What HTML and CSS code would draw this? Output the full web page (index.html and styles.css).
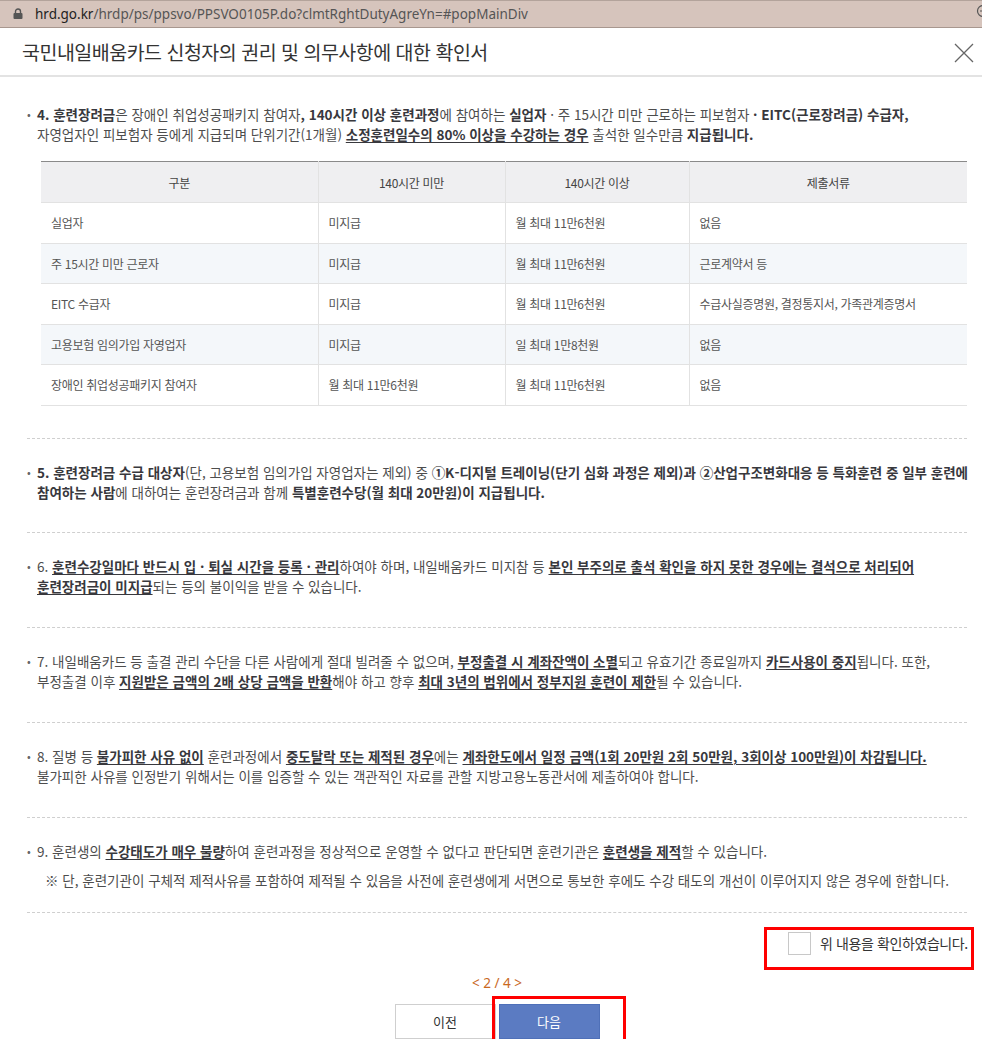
FILE: index.html
```html
<!DOCTYPE html>
<html lang="ko">
<head>
<meta charset="utf-8">
<title>국민내일배움카드 신청자의 권리 및 의무사항에 대한 확인서</title>
<link rel="stylesheet" href="styles.css">
</head>
<body>
<div class="urlbar">
  <svg class="lock" width="10" height="11" viewBox="0 0 10 11"><path d="M2.5 5V3.5a2.5 2.5 0 0 1 5 0V5" fill="none" stroke="#555" stroke-width="1.4"/><rect x="0.5" y="5" width="9" height="6" rx="1" fill="#555"/></svg>
  <span class="url"><span class="host">hrd.go.kr</span><span class="path">/hrdp/ps/ppsvo/PPSVO0105P.do?clmtRghtDutyAgreYn=#popMainDiv</span></span>
  <svg class="zoomicon" width="14" height="14" viewBox="0 0 14 14"><circle cx="7" cy="7" r="5.5" fill="none" stroke="#555" stroke-width="1.2"/><path d="M4 7h6" stroke="#555" stroke-width="1.2"/></svg>
</div>

<div class="modal">
  <div class="modal-head">
    <h1 class="title">국민내일배움카드 신청자의 권리 및 의무사항에 대한 확인서</h1>
    <span class="close" aria-label="닫기"><svg width="20" height="20" viewBox="0 0 20 20"><path d="M1 1L19 19M19 1L1 19" stroke="#666" stroke-width="1.3" fill="none"/></svg></span>
  </div>

  <div class="modal-body">
    <div class="item item-first">
      <div class="para">
        <span class="dot">•</span>
        <p class="txt"><b>4. 훈련장려금</b>은 장애인 취업성공패키지 참여자<b>, 140시간 이상 훈련과정</b>에 참여하는 <b>실업자</b> · 주 15시간 미만 근로하는 피보험자 <b>· EITC(근로장려금) 수급자,</b><br>자영업자인 피보험자 등에게 지급되며 단위기간(1개월) <b class="u">소정훈련일수의 80% 이상을 수강하는 경우</b> 출석한 일수만큼 <b>지급됩니다.</b></p>
      </div>
      <table class="grid">
        <colgroup><col class="c1"><col class="c2"><col class="c3"><col class="c4"></colgroup>
        <thead>
          <tr><th>구분</th><th>140시간 미만</th><th>140시간 이상</th><th>제출서류</th></tr>
        </thead>
        <tbody>
          <tr><td>실업자</td><td>미지급</td><td>월 최대 11만6천원</td><td>없음</td></tr>
          <tr class="alt"><td>주 15시간 미만 근로자</td><td>미지급</td><td>월 최대 11만6천원</td><td>근로계약서 등</td></tr>
          <tr><td>EITC 수급자</td><td>미지급</td><td>월 최대 11만6천원</td><td>수급사실증명원, 결정통지서, 가족관계증명서</td></tr>
          <tr class="alt"><td>고용보험 임의가입 자영업자</td><td>미지급</td><td>일 최대 1만8천원</td><td>없음</td></tr>
          <tr><td>장애인 취업성공패키지 참여자</td><td>월 최대 11만6천원</td><td>월 최대 11만6천원</td><td>없음</td></tr>
        </tbody>
      </table>
    </div>

    <div class="item">
      <div class="para">
        <span class="dot">•</span>
        <p class="txt"><b>5. 훈련장려금 수급 대상자</b>(단, 고용보험 임의가입 자영업자는 제외) 중 <b>①K-디지털 트레이닝(단기 심화 과정은 제외)과 ②산업구조변화대응 등 특화훈련 중 일부 훈련에</b><br><b>참여하는 사람</b>에 대하여는 훈련장려금과 함께 <b>특별훈련수당(월 최대 20만원)이 지급됩니다.</b></p>
      </div>
    </div>

    <div class="item">
      <div class="para">
        <span class="dot">•</span>
        <p class="txt">6. <b class="u">훈련수강일마다 반드시 입 · 퇴실 시간을 등록 · 관리</b>하여야 하며, 내일배움카드 미지참 등 <b class="u">본인 부주의로 출석 확인을 하지 못한 경우에는 결석으로 처리되어</b><br><b class="u">훈련장려금이 미지급</b>되는 등의 불이익을 받을 수 있습니다.</p>
      </div>
    </div>

    <div class="item">
      <div class="para">
        <span class="dot">•</span>
        <p class="txt">7. 내일배움카드 등 출결 관리 수단을 다른 사람에게 절대 빌려줄 수 없으며, <b class="u">부정출결 시 계좌잔액이 소멸</b>되고 유효기간 종료일까지 <b class="u">카드사용이 중지</b>됩니다. 또한,<br>부정출결 이후 <b class="u">지원받은 금액의 2배 상당 금액을 반환</b>해야 하고 향후 <b class="u">최대 3년의 범위에서 정부지원 훈련이 제한</b>될 수 있습니다.</p>
      </div>
    </div>

    <div class="item">
      <div class="para">
        <span class="dot">•</span>
        <p class="txt">8. 질병 등 <b class="u">불가피한 사유 없이</b> 훈련과정에서 <b class="u">중도탈락 또는 제적된 경우</b>에는 <b class="u">계좌한도에서 일정 금액(1회 20만원 2회 50만원, 3회이상 100만원)이 차감됩니다.</b><br>불가피한 사유를 인정받기 위해서는 이를 입증할 수 있는 객관적인 자료를 관할 지방고용노동관서에 제출하여야 합니다.</p>
      </div>
    </div>

    <div class="item item-last">
      <div class="para">
        <span class="dot">•</span>
        <p class="txt">9. 훈련생의 <b class="u">수강태도가 매우 불량</b>하여 훈련과정을 정상적으로 운영할 수 없다고 판단되면 훈련기관은 <b class="u">훈련생을 제적</b>할 수 있습니다.</p>
      </div>
      <p class="note">※ 단, 훈련기관이 구체적 제적사유를 포함하여 제적될 수 있음을 사전에 훈련생에게 서면으로 통보한 후에도 수강 태도의 개선이 이루어지지 않은 경우에 한합니다.</p>
    </div>

    <div class="agree-row">
      <label class="agree"><span class="chk"></span><span class="agree-text">위 내용을 확인하였습니다.</span></label>
    </div>

    <div class="pager">&lt; 2 / 4 &gt;</div>

    <div class="btns">
      <button class="btn prev" type="button">이전</button>
      <span class="next-wrap"><button class="btn next" type="button">다음</button><span class="mark"></span></span>
    </div>
  </div>
</div>
</body>
</html>
```

FILE: styles.css
```css
* { box-sizing: border-box; }
html, body { margin: 0; padding: 0; background: #fff; }
body {
  font-family: "Noto Sans CJK KR", "Noto Sans", sans-serif;
  color: #555;
  width: 982px;
  overflow: hidden;
}

/* browser address bar */
.urlbar {
  height: 28px;
  background: #d6c4bc;
  border-top: 1px solid #b3a39b;
  border-bottom: 1px solid #a8978f;
  display: flex;
  align-items: center;
  padding-left: 13px;
  overflow: hidden;
}
.lock { flex: none; margin-right: 12px; margin-top: -1px; }
.url {
  font-family: "Noto Sans", "Liberation Sans", sans-serif;
  font-size: 13.5px;
  white-space: nowrap;
}
.host { color: #222; }
.path { color: #555; }
.zoomicon { flex: none; margin-left: auto; margin-right: -8px; margin-top: -6px; }

/* modal header */
.modal-head {
  height: 49px;
  display: flex;
  align-items: center;
  justify-content: space-between;
  padding: 0 8px 0 22px;
  border-bottom: 2px solid #e3e3e3;
}
.title {
  margin: 0;
  font-size: 19.5px;
  font-weight: 400;
  color: #333;
  letter-spacing: -0.5px;
  line-height: 26px;
}
.close { display: flex; margin-top: 2px; }

/* body */
.modal-body { padding: 0 15px 0 27px; }

.item {
  border-bottom: 1px dashed #cfcfcf;
  padding: 23px 0 30.9px;
}
.item-first { padding: 27px 0 32px; }
.item-last { padding-bottom: 22px; }

.para { display: flex; }
.dot {
  flex: none;
  width: 10px;
  font-size: 11px;
  line-height: 20px;
  color: #666;
}
.txt, .note {
  margin: 0;
  font-size: 13.5px;
  line-height: 20px;
  letter-spacing: 0;
  white-space: nowrap;
  color: #4d4d4d;
}
.txt b, .note b { font-weight: 700; color: #38383d; }
.txt b.u { text-decoration: underline; text-underline-offset: 2px; text-decoration-thickness: 1px; }
.note { margin-top: 9px; padding-left: 18px; }

/* table */
.grid {
  margin: 17px 0 0 14px;
  width: 926px;
  border-collapse: collapse;
  table-layout: fixed;
  font-size: 12px;
  letter-spacing: -0.3px;
}
.grid col.c1 { width: 277px; }
.grid col.c2 { width: 187px; }
.grid col.c3 { width: 184px; }
.grid col.c4 { width: 278px; }
.grid thead tr { border-top: 1px solid #8a8a8a; }
.grid th {
  height: 41px;
  background: #efeff1;
  font-weight: 400;
  color: #444;
  text-align: center;
  border-bottom: 1px solid #e2e2e2;
  padding: 0;
}
.grid td {
  height: 40.5px;
  padding: 0 0 0 10px;
  color: #555;
  border-bottom: 1px solid #e2e2e2;
  white-space: nowrap;
}
.grid th + th, .grid td + td { border-left: 1px solid #e2e2e2; }
.grid tr.alt td { background: #f4f7fa; }

/* agree */
.agree-row {
  display: flex;
  justify-content: flex-end;
  margin: 14px -7px 0 0;
}
.agree {
  width: 210px;
  height: 43px;
  border: 3px solid #f00;
  display: flex;
  align-items: flex-start;
  padding: 2px 0 0 21px;
}
.chk {
  flex: none;
  width: 23px;
  height: 23px;
  border: 1px solid #c8c8c8;
  background: #fff;
  margin-right: 9px;
}
.agree-text {
  font-size: 14px;
  letter-spacing: -0.4px;
  line-height: 22px;
  color: #333;
  white-space: nowrap;
}

/* pager */
.pager {
  margin-top: 4px;
  text-align: center;
  font-family: "Noto Sans", sans-serif;
  font-size: 13.5px;
  line-height: 18px;
  color: #c9691e;
}

.btns {
  margin-top: 12px;
  display: flex;
  justify-content: center;
  gap: 3px;
}
.btn {
  width: 101px;
  height: 35px;
  font-family: "Noto Sans CJK KR", sans-serif;
  font-size: 13px;
  cursor: pointer;
  padding: 0;
}
.prev { background: #fff; border: 1px solid #cfcfcf; color: #333; }
.next { background: #5b7bc2; border: 1px solid #4f70b8; color: #fff; display: block; }
.next-wrap { position: relative; display: block; }
.mark {
  position: absolute;
  left: -7px;
  top: -8px;
  width: 134px;
  height: 53px;
  border: 3px solid #f00;
  pointer-events: none;
}
```
